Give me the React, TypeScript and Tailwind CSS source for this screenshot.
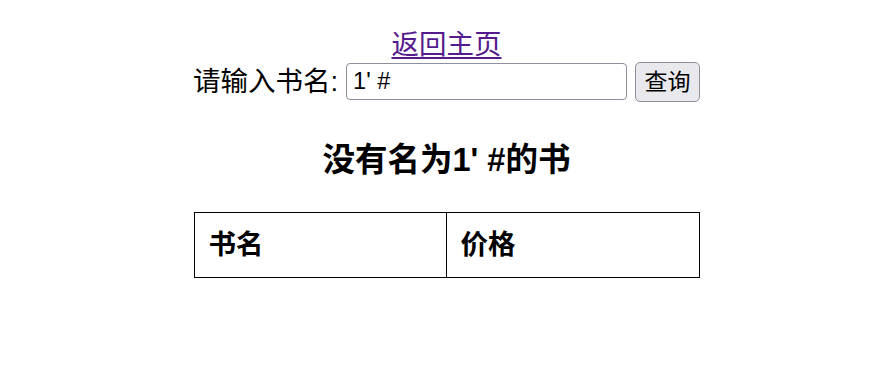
export default function App() {
  return (
    <div
      className="w-[876px] h-[377px] bg-white text-black flex flex-col items-center pl-[17px] pt-[26px]"
      style={{ fontFamily: '"Liberation Sans", "Noto Sans CJK SC", sans-serif' }}
    >
      <div className="h-[36px] leading-[38px] text-[27.5px]">
        <a href="#" className="text-[#551a8b] underline underline-offset-[3px] decoration-[2px]">
          返回主页
        </a>
      </div>
      <div className="flex items-start h-[40px] text-[27.5px]">
        <span className="leading-[40px]">请输入书名:</span>
        <input
          type="text"
          defaultValue="1' #"
          className="ml-[8px] mt-[1px] w-[281px] h-[37px] border border-[#8f8f9d] rounded-[4px] px-[6px] text-[23.5px] text-black bg-white outline-none"
          style={{ fontFamily: '"Liberation Sans", "Noto Sans CJK SC", sans-serif' }}
        />
        <button
          className="ml-[8px] w-[65px] h-[40px] border border-[#8f8f9d] rounded-[5px] bg-[#e9e9ed] text-[23px] leading-[38px] text-black"
          style={{ fontFamily: '"Liberation Sans", "Noto Sans CJK SC", sans-serif' }}
        >
          查询
        </button>
      </div>
      <h3 className="mt-[38px] h-[40px] leading-[40px] text-[32.5px] font-bold">没有名为1' #的书</h3>
      <table className="mt-[32px] w-[506px] border-collapse text-[27.5px]">
        <thead>
          <tr>
            <th className="w-[252px] h-[65px] border border-black px-[14px] text-left font-bold">书名</th>
            <th className="h-[65px] border border-black px-[14px] text-left font-bold">价格</th>
          </tr>
        </thead>
      </table>
    </div>
  );
}
